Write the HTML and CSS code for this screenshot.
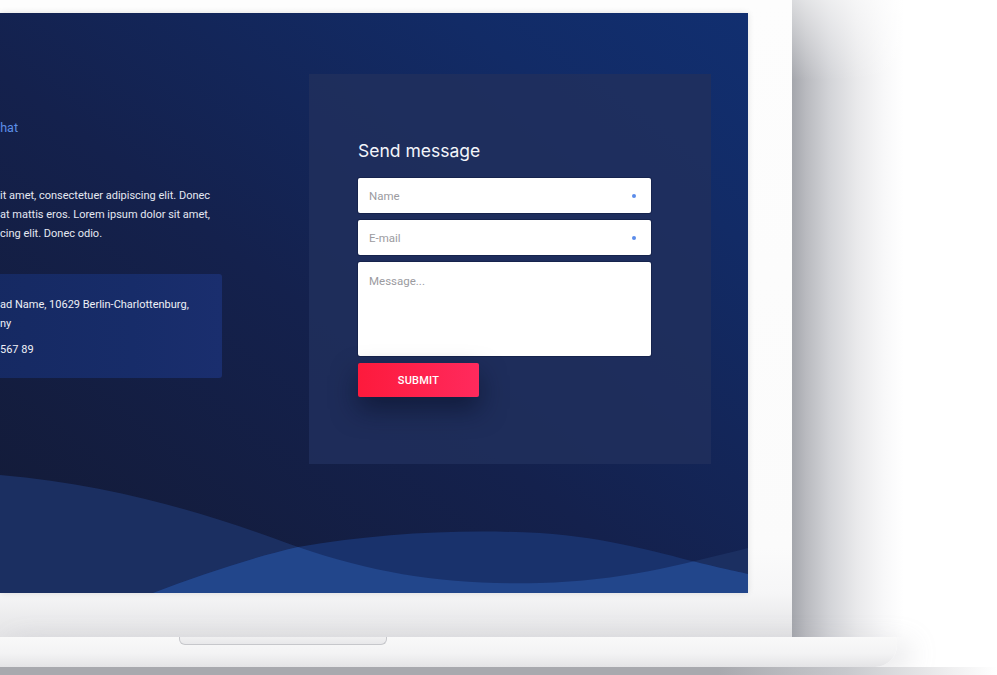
FILE: index.html
```html
<!DOCTYPE html>
<html lang="en">
<head>
<meta charset="utf-8">
<title>Contact</title>
<link rel="stylesheet" href="styles.css">
</head>
<body>
<div class="stage">
  <div class="lid-row">
    <div class="lid">
      <div class="screen">
        <svg class="waves" width="748" height="580" viewBox="0 0 748 580" aria-hidden="true">
          <defs>
            <clipPath id="w1clip">
              <path d="M0,462 C120,472 220,505 298,534 C380,562 450,572 540,570 C620,568 680,552 748,535 L748,580 L0,580 Z"/>
            </clipPath>
          </defs>
          <path fill="#1b2f61" d="M0,462 C120,472 220,505 298,534 C380,562 450,572 540,570 C620,568 680,552 748,535 L748,580 L0,580 Z"/>
          <path fill="#19326c" d="M153,580 C200,562 250,545 298,534 C380,520 460,516 540,520 C610,525 660,540 692,548 C720,555 735,558 748,561 L748,580 Z"/>
          <path fill="#22468b" clip-path="url(#w1clip)" d="M153,580 C200,562 250,545 298,534 C380,520 460,516 540,520 C610,525 660,540 692,548 C720,555 735,558 748,561 L748,580 Z"/>
        </svg>
        <div class="info">
          <a class="chat-link" href="#">Live chat</a>
          <p class="lead">it amet, consectetuer adipiscing elit. Donec<br>at mattis eros. Lorem ipsum dolor sit amet,<br>cing elit. Donec odio.</p>
          <div class="address">
            <p class="addr">ad Name, 10629 Berlin-Charlottenburg,<br>ny</p>
            <p class="phone">567 89</p>
          </div>
        </div>
        <div class="form-card">
          <h2 class="form-title">Send message</h2>
          <form class="form">
            <label class="field">
              <input class="field-input" type="text" placeholder="Name">
              <span class="dot"></span>
            </label>
            <label class="field">
              <input class="field-input" type="text" placeholder="E-mail">
              <span class="dot"></span>
            </label>
            <textarea class="field-area" placeholder="Message..."></textarea>
            <button class="submit" type="button">Submit</button>
          </form>
        </div>
      </div>
    </div>
    <div class="lid-shadow"></div>
  </div>
  <div class="base-row">
    <div class="base"><div class="notch"></div></div>
  </div>
  <div class="floor"></div>
</div>
</body>
</html>
```
FILE: styles.css
```css
* { box-sizing: border-box; }
html, body { margin: 0; padding: 0; background: #ffffff; }
body { font-family: Roboto, "Liberation Sans", sans-serif; overflow: hidden; }

.stage { width: 997px; height: 675px; overflow: hidden; display: flex; flex-direction: column; }

.lid-row { display: flex; height: 637px; }
.lid {
  width: 792px;
  padding-top: 13px;
  background: linear-gradient(to bottom, #fdfdfd 0%, #fbfbfb 86%, #f6f6f7 93%, #e3e3e5 100%);
}
.lid-shadow {
  flex: 1;
  background:
    linear-gradient(to bottom, rgba(255,255,255,0.6) 0px, rgba(255,255,255,0) 80px),
    linear-gradient(to right, #a4a6ac 0px, #b9babf 14px, #d3d4d8 38px, #e9e9eb 65px, #f8f8f9 92px, #ffffff 112px);
}

.screen {
  position: relative;
  width: 748px;
  height: 580px;
  overflow: hidden;
  display: flex;
  align-items: flex-start;
  background: linear-gradient(to top right, #131a35 0%, #14214d 45%, #122b66 80%, #112f70 100%);
  box-shadow: 0 0 6px rgba(0,0,0,0.12);
}
.waves { position: absolute; left: 0; top: 0; }

.info {
  position: relative;
  width: 300px;
  margin-left: -78px;
  padding-top: 106px;
  color: #e6e9f2;
}
.chat-link {
  display: block;
  text-align: right;
  width: 96px;
  font-size: 12.5px;
  line-height: 18px;
  color: #5d8fe8;
  text-decoration: none;
}
.lead {
  margin: 49px 0 0 78px;
  font-size: 11px;
  line-height: 19px;
  white-space: nowrap;
  color: #e4e8f2;
}
.address {
  margin-top: 31px;
  height: 104px;
  border-radius: 3px;
  padding: 21px 0 0 78px;
  background: linear-gradient(to right, #15285f 0%, #172c69 70%, #1a2e6e 100%);
}
.address p { margin: 0; font-size: 11px; line-height: 19px; white-space: nowrap; color: #eef0f6; }
.address .phone { margin-top: 7px; }

.form-card {
  position: relative;
  margin-left: 87px;
  margin-top: 61px;
  width: 402px;
  height: 390px;
  padding: 65px 0 0 49px;
  background: rgba(33, 47, 93, 0.82);
}
.form-title {
  margin: 0;
  font-family: Inter, "Open Sans", sans-serif;
  font-weight: 400;
  font-size: 17.5px;
  line-height: 24px;
  color: #f3f5fa;
}
.form { margin-top: 15px; width: 293px; display: flex; flex-direction: column; gap: 7px; align-items: flex-start; }
.field {
  display: flex;
  align-items: center;
  width: 293px;
  height: 35px;
  background: #ffffff;
  border-radius: 2px;
  box-shadow: 0 0 0 1px rgba(8, 16, 50, 0.35);
  padding: 0 15px 0 11px;
}
.field-input {
  flex: 1;
  border: none;
  outline: none;
  background: transparent;
  font-family: Roboto, "Liberation Sans", sans-serif;
  font-size: 11.5px;
  color: #333;
  padding: 0;
}
.field-input::placeholder, .field-area::placeholder { color: #9b9b9f; }
.dot { width: 4px; height: 4px; border-radius: 50%; background: #5b8cea; }
.field-area {
  display: block;
  width: 293px;
  height: 94px;
  resize: none;
  border: none;
  outline: none;
  border-radius: 2px;
  box-shadow: 0 0 0 1px rgba(8, 16, 50, 0.35);
  padding: 12px 11px;
  font-family: Roboto, "Liberation Sans", sans-serif;
  font-size: 11.5px;
  line-height: 14px;
  background: #fff;
}
.submit {
  width: 121px;
  height: 34px;
  border: none;
  border-radius: 2px;
  background: linear-gradient(to right, #fd1a3c 0%, #ff2a5d 100%);
  color: #ffffff;
  font-family: Roboto, "Liberation Sans", sans-serif;
  font-weight: 500;
  font-size: 11px;
  letter-spacing: 0.2px;
  text-transform: uppercase;
  box-shadow: 0 12px 26px rgba(8, 12, 35, 0.55);
}

.base-row { display: flex; height: 30px; }
.base {
  width: 897px;
  height: 30px;
  border-radius: 0 4px 22px 0;
  background: linear-gradient(to bottom, #f9f9f9 0%, #f3f3f4 55%, #e4e4e6 100%);
  box-shadow: 14px 6px 28px rgba(150, 152, 160, 0.22);
}
.notch {
  margin-left: 179px;
  width: 208px;
  height: 8px;
  border: 1px solid #c6c7cb;
  border-top: none;
  border-radius: 0 0 6px 6px;
  background: linear-gradient(to bottom, #f0f0f1, #e8e8ea);
}
.floor {
  height: 8px;
  background: linear-gradient(to right, #a8a9ae 0%, #a8a9ae 72%, #c8c9cd 85%, #eeeeef 95%, #ffffff 100%);
}
```
